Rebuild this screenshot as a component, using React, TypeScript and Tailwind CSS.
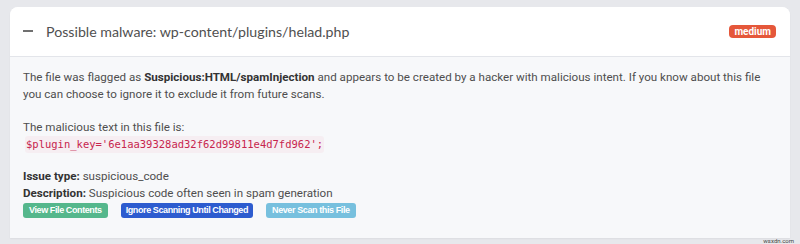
export default function App() {
  return (
    <div className="relative h-[244px] w-[800px] bg-[#e7e8ec] pt-[7px] px-[10px]" style={{ fontFamily: 'Roboto, "Liberation Sans", sans-serif' }}>
      <div className="h-[231px] rounded-t-[8px] bg-[#f7f8fa] overflow-hidden shadow-[0_1px_2px_rgba(0,0,0,0.05)]">
        <div className="flex h-[50px] items-center justify-between border-b border-[#e3e5ea] bg-white pl-[13px] pr-[14px]">
          <div className="flex items-center">
            <span className="block h-[2px] w-[10px] bg-[#707070]" />
            <span className="ml-[13px] text-[14.2px] text-[#505050]" style={{ fontFamily: 'Lato, "Open Sans", sans-serif' }}>
              Possible malware: wp-content/plugins/helad.php
            </span>
          </div>
          <span className="rounded-[4px] bg-[#e5573a] px-[5px] py-[1px] text-[10px] font-bold leading-[11px] text-white">
            medium
          </span>
        </div>
        <div className="px-[13px] pt-[12px] text-[11.6px] leading-[17px] text-[#4e4e4e]">
          <p>
            The file was flagged as <b className="text-[#333]">Suspicious:HTML/spamInjection</b> and appears to be created by a hacker with malicious intent. If you know about this file you can choose to ignore it to exclude it from future scans.
          </p>
          <p className="mt-[16px]">The malicious text in this file is:</p>
          <code className="ml-[2px] inline-block rounded-[3px] bg-[#f6eef2] px-[1px] text-[10.5px] leading-[17px] text-[#c7254e]" style={{ fontFamily: '"DejaVu Sans Mono", monospace' }}>
            $plugin_key='6e1aa39328ad32f62d99811e4d7fd962';
          </code>
          <p className="mt-[15px]"><b className="text-[#333]">Issue type:</b> suspicious_code</p>
          <p><b className="text-[#333]">Description:</b> Suspicious code often seen in spam generation</p>
          <div className="mt-[1px] flex gap-[13px] text-[9px] font-bold leading-[15px] tracking-[-0.4px] text-white" style={{ fontFamily: '"Liberation Sans", Arial, sans-serif' }}>
            <span className="rounded-[3px] bg-[#55b78c] px-[6px]">View File Contents</span>
            <span className="rounded-[3px] bg-[#2d5ccf] px-[5px]">Ignore Scanning Until Changed</span>
            <span className="rounded-[3px] bg-[#77c0de] px-[6px]">Never Scan this File</span>
          </div>
        </div>
      </div>
      <span className="absolute bottom-0 right-[6px] text-[6px] leading-[7px] text-[#444]">wsxdn.com</span>
    </div>
  );
}
